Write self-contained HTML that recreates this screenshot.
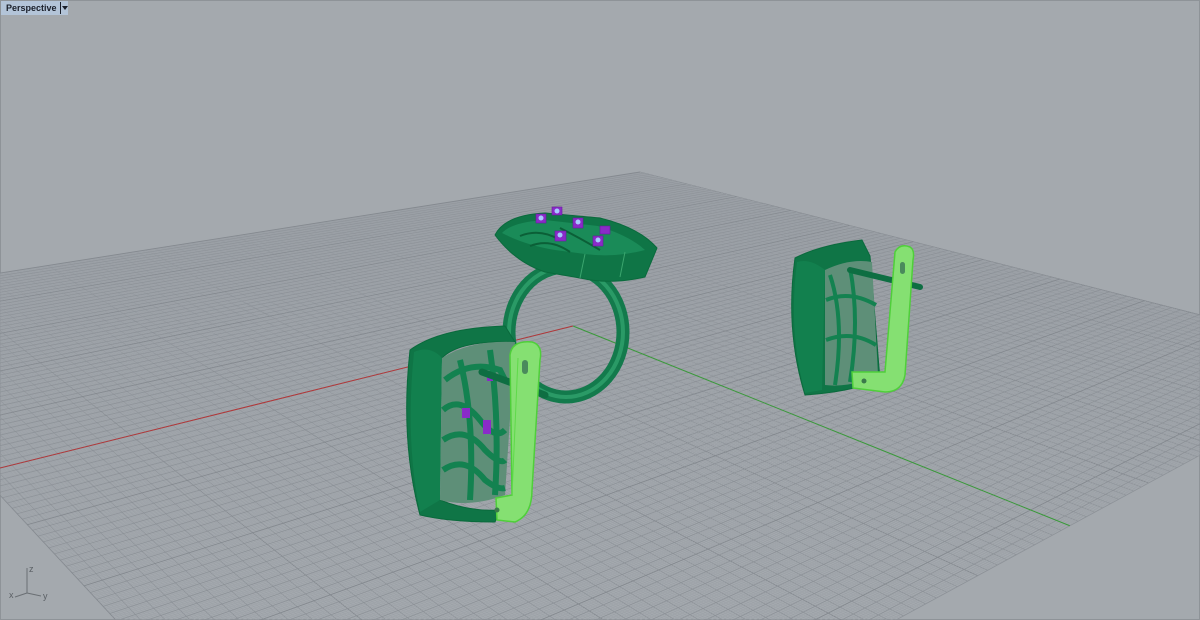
<!DOCTYPE html>
<html><head><meta charset="utf-8">
<style>
html,body{margin:0;padding:0;width:1200px;height:620px;overflow:hidden;background:#a4a9ae;}
#vp{position:absolute;left:0;top:0;width:1200px;height:620px;overflow:hidden;}
#lbl{position:absolute;left:1px;top:1px;height:14px;width:67px;background:#b3c4d8;font:bold 9px "Liberation Sans",sans-serif;color:#1a1f2a;line-height:14px;white-space:nowrap;}
#lbl span{padding-left:5px;}
#lbl i{position:absolute;left:59px;top:1px;width:1px;height:12px;background:#1a1f2a;}
#lbl b{position:absolute;left:61px;top:5px;width:0;height:0;border-left:3px solid transparent;border-right:3px solid transparent;border-top:4px solid #1a1f2a;}
</style></head><body>
<svg id="vp" width="1200" height="620" viewBox="0 0 1200 620" xmlns="http://www.w3.org/2000/svg">
<rect x="0.5" y="0.5" width="1199" height="619" fill="#a4a9ae" stroke="#8e9398"/>
<g id="grid"></g>
<g id="axes"></g>
<g stroke="#6a6f74" stroke-width="1" fill="none">
<line x1="27" y1="593" x2="27" y2="568"/>
<line x1="27" y1="593" x2="15" y2="597"/>
<line x1="27" y1="593" x2="41" y2="596"/>
</g>
<g font-family="Liberation Sans,sans-serif" font-size="9" fill="#5a5f64">
<text x="29" y="572">z</text><text x="9" y="598">x</text><text x="43" y="599">y</text>
</g>

<!-- RING shank -->
<ellipse cx="566" cy="332" rx="57" ry="65" fill="none" stroke="#137a4c" stroke-width="13"/>
<ellipse cx="566" cy="332" rx="57" ry="65" fill="none" stroke="#2a9a66" stroke-width="4"/>
<!-- ring head -->
<path d="M495 235 Q505 215 545 213 L600 218 Q640 228 657 248 L645 277 Q610 285 580 278 L545 272 Q515 262 495 235 Z" fill="#0f7546" stroke="#0a6a3c"/>
<path d="M502 233 Q512 222 545 220 L598 226 Q630 236 645 250 Q615 258 585 254 L555 250 Q525 245 502 233 Z" fill="#1a8b58"/>
<path d="M520 236 Q540 228 560 240 M560 228 Q580 238 600 250 M530 246 Q550 238 570 252" stroke="#0b5f37" stroke-width="2" fill="none"/>
<path d="M585 254 L580 278 M625 252 L620 277" stroke="#3aa56e" stroke-width="1" fill="none"/>
<g fill="#8a2bc8" stroke="#6a1aa0" stroke-width="0.6">
<rect x="536" y="214" width="10" height="9"/><rect x="555" y="231" width="11" height="10"/>
<rect x="573" y="218" width="10" height="10"/><rect x="593" y="236" width="10" height="10"/>
<rect x="600" y="226" width="10" height="8"/><rect x="552" y="207" width="10" height="8"/>
</g>
<g fill="#a8c8ff"><circle cx="541" cy="218" r="2.5"/><circle cx="560" cy="235" r="2.5"/><circle cx="578" cy="222" r="2.5"/><circle cx="598" cy="240" r="2.5"/><circle cx="557" cy="211" r="2.5"/></g>

<!-- LEFT EARRING body -->
<path d="M410 350 Q440 328 505 326 L515 342 Q460 340 442 358 Q432 420 440 500 Q470 512 500 510 L495 522 Q450 522 420 515 Q400 440 410 350 Z" fill="#0f7546" stroke="#0a6a3c"/>
<path d="M414 352 Q430 345 442 358 L440 500 L420 512 Q405 440 414 352 Z" fill="#12804e"/>
<path d="M442 358 Q470 340 515 342 L505 495 Q470 508 440 500 Z" fill="#5e8f78"/>
<g stroke="#138250" stroke-width="6" fill="none">
<path d="M445 380 Q470 360 500 370 L505 380"/>
<path d="M443 410 Q460 395 480 420 Q495 440 505 430"/>
<path d="M443 440 Q465 425 485 450 Q500 465 505 460"/>
<path d="M443 470 Q465 455 485 480 Q498 490 505 488"/>
<path d="M460 360 Q475 420 470 500"/>
<path d="M490 350 Q500 420 495 495"/>
</g>
<g fill="#8a2bc8"><rect x="483" y="420" width="8" height="14"/><rect x="462" y="408" width="8" height="10"/><rect x="487" y="373" width="6" height="8"/></g>
<line x1="482" y1="372" x2="545" y2="395" stroke="#0e6e42" stroke-width="7" stroke-linecap="round"/>
<path d="M510 355 Q512 340 532 342 Q543 345 540 360 L532 490 Q532 515 515 522 L497 520 L496 498 L512 495 Z" fill="#85e072" stroke="#4fcf3a" stroke-width="1.5"/>
<path d="M518 358 L512 495" stroke="#5fd94a" fill="none"/>
<rect x="522" y="360" width="6" height="14" rx="3" fill="#4a8a5c"/>
<circle cx="497" cy="510" r="2.5" fill="#3a7a4a"/>

<!-- RIGHT EARRING -->
<path d="M795 258 Q820 245 862 240 L870 256 L880 380 Q850 392 805 395 Q785 330 795 258 Z" fill="#0f7546" stroke="#0a6a3c"/>
<path d="M797 262 Q810 258 825 270 L822 390 L805 393 Q788 330 797 262 Z" fill="#12804e"/>
<path d="M825 270 Q850 258 872 262 L878 375 Q850 388 825 385 Z" fill="#5e8f78"/>
<g stroke="#138250" stroke-width="4" fill="none">
<path d="M830 275 Q845 320 835 385"/><path d="M850 268 Q860 320 850 382"/>
<path d="M826 300 Q850 290 876 305"/><path d="M826 340 Q852 330 876 345"/>
</g>
<line x1="850" y1="270" x2="920" y2="287" stroke="#0e6e42" stroke-width="6" stroke-linecap="round"/>
<path d="M895 252 Q900 243 910 247 Q915 250 913 260 L905 375 Q902 392 885 392 L853 388 L852 372 L885 372 Z" fill="#85e072" stroke="#4fcf3a" stroke-width="1.5"/>
<rect x="900" y="262" width="5" height="12" rx="2.5" fill="#4a8a5c"/>
<circle cx="864" cy="381" r="2.5" fill="#3a7a4a"/>
</svg>
<div id="lbl"><span>Perspective</span><i></i><b></b></div>
<script>
(function(){
var a=0.005426,b=0.005644,v1=[2167,-69],v2=[-591,-142],o=[573,326];
function P(p,q){var d=a*p+b*q+1;return [(a*p*v1[0]+b*q*v2[0]+o[0])/d,(a*p*v1[1]+b*q*v2[1]+o[1])/d];}
var g=document.getElementById('grid'),s='';
var N=50,Qm=-53,st=0.2;
function col(k){if(k%50==0)return['#84898f',0.9];if(k%5==0)return['#8d9298',0.8];return['#9ba0a6',0.5];}
for(var k=-N/st;k<=N/st;k++){
 var i=k*st,A=P(i,Qm),B=P(i,N),c=col(k);
 s+='<line x1="'+A[0].toFixed(1)+'" y1="'+A[1].toFixed(1)+'" x2="'+B[0].toFixed(1)+'" y2="'+B[1].toFixed(1)+'" stroke="'+c[0]+'" stroke-width="'+c[1]+'"/>';
}
for(var k=Math.ceil(Qm/st);k<=N/st;k++){
 var j=k*st,A=P(-N,j),B=P(N,j),c=col(k);
 s+='<line x1="'+A[0].toFixed(1)+'" y1="'+A[1].toFixed(1)+'" x2="'+B[0].toFixed(1)+'" y2="'+B[1].toFixed(1)+'" stroke="'+c[0]+'" stroke-width="'+c[1]+'"/>';
}
g.innerHTML=s;
var r0=P(0,0),r1=P(-N,0),g1=P(0,Qm);
document.getElementById('axes').innerHTML='<line x1="'+r0[0]+'" y1="'+r0[1]+'" x2="'+r1[0]+'" y2="'+r1[1]+'" stroke="#b0383a" stroke-width="1"/><line x1="'+r0[0]+'" y1="'+r0[1]+'" x2="'+g1[0]+'" y2="'+g1[1]+'" stroke="#3a9a3a" stroke-width="1"/>';
})();
</script>
</body></html>
